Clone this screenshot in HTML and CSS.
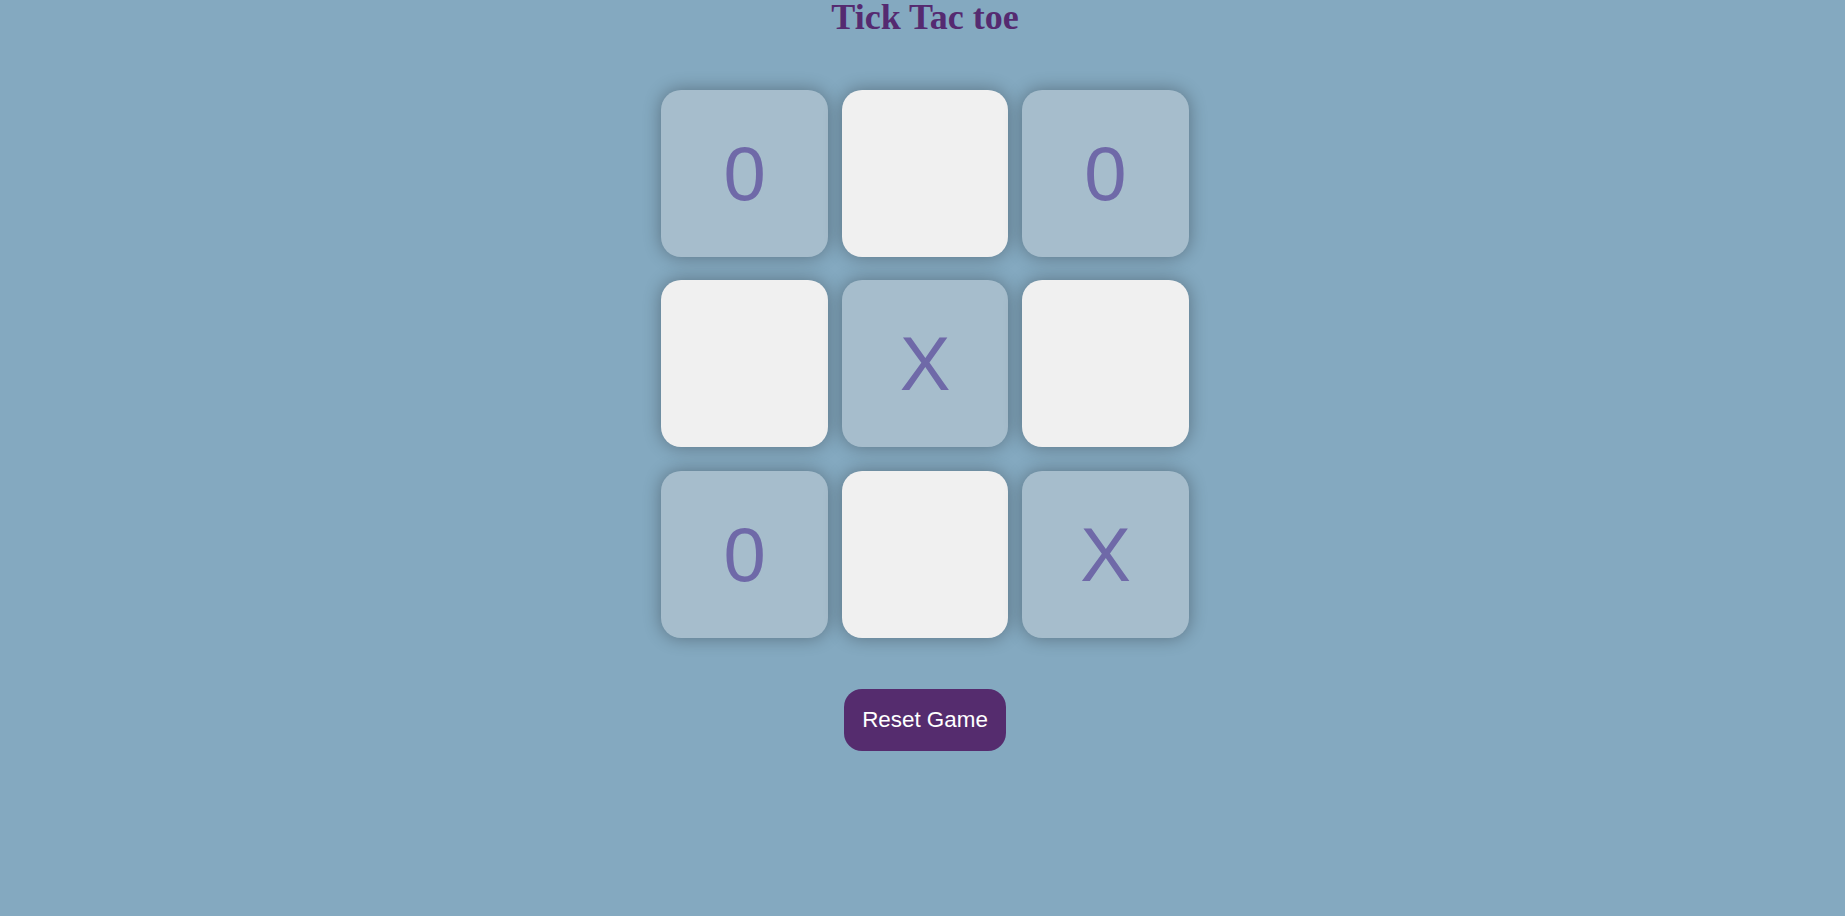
FILE: index.html
```html
<!DOCTYPE html>
<html lang="en">
<head>
<meta charset="utf-8">
<title>Tick Tac toe</title>
<link rel="stylesheet" href="styles.css">
</head>
<body>
<main class="game">
  <h1 class="title">Tick Tac toe</h1>
  <div class="board">
    <div class="cell filled">0</div>
    <div class="cell"></div>
    <div class="cell filled">0</div>
    <div class="cell"></div>
    <div class="cell filled">X</div>
    <div class="cell"></div>
    <div class="cell filled">0</div>
    <div class="cell"></div>
    <div class="cell filled">X</div>
  </div>
  <button class="reset">Reset Game</button>
</main>
</body>
</html>
```

FILE: styles.css
```css
html, body {
  margin: 0;
  padding: 0;
}

body {
  background: #84a9c0;
  min-height: 916px;
}

.game {
  display: flex;
  flex-direction: column;
  align-items: center;
  padding-left: 5px;
}

.title {
  margin: 0;
  font-family: "Liberation Serif", "Times New Roman", serif;
  font-weight: bold;
  font-size: 36px;
  line-height: 34px;
  color: #552a70;
}

.board {
  margin-top: 56px;
  display: grid;
  grid-template-columns: repeat(3, 166.7px);
  grid-auto-rows: 166.7px;
  column-gap: 13.8px;
  row-gap: 23.8px;
}

.cell {
  display: flex;
  align-items: center;
  justify-content: center;
  background: #f0f0f0;
  border-radius: 20px;
  box-shadow: 0 0 18px rgba(0, 0, 0, 0.33);
  font-family: "Liberation Sans", Arial, sans-serif;
  font-size: 76px;
  color: #6f69a8;
}

.cell.filled {
  background: #a6bdcc;
}

.reset {
  margin-top: 51.6px;
  padding: 18px;
  border: none;
  border-radius: 18px;
  background: #552c6e;
  color: #ffffff;
  font-family: "Liberation Sans", Arial, sans-serif;
  font-size: 22.4px;
  line-height: 25.7px;
  cursor: pointer;
}
```
